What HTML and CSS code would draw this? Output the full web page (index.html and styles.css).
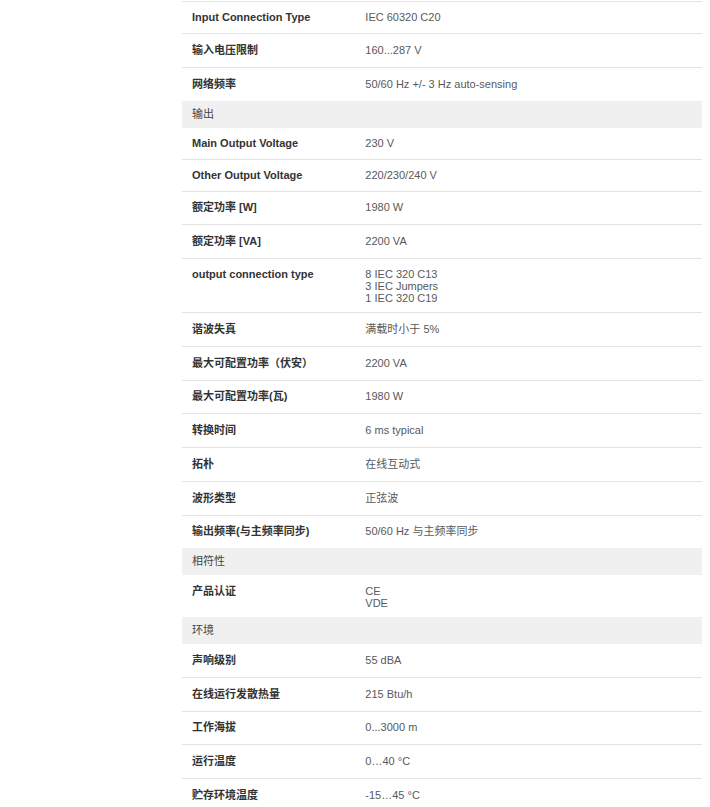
FILE: index.html
```html
<!DOCTYPE html>
<html lang="zh-CN">
<head>
  <meta charset="UTF-8">
  <meta name="viewport" content="width=device-width, initial-scale=1.0">
  <title>技术规格</title>
  <link rel="stylesheet" href="styles.css">
</head>
<body>
  <div class="layout">
    <aside class="sidebar"></aside>
    <main class="specs">
      <div class="spec-row"><div class="spec-label">Input Connection Type</div><div class="spec-value">IEC 60320 C20</div></div>
      <div class="spec-row"><div class="spec-label">输入电压限制</div><div class="spec-value">160...287 V</div></div>
      <div class="spec-row"><div class="spec-label">网络频率</div><div class="spec-value">50/60 Hz +/- 3 Hz auto-sensing</div></div>

      <div class="spec-group">输出</div>
      <div class="spec-row"><div class="spec-label">Main Output Voltage</div><div class="spec-value">230 V</div></div>
      <div class="spec-row"><div class="spec-label">Other Output Voltage</div><div class="spec-value">220/230/240 V</div></div>
      <div class="spec-row"><div class="spec-label">额定功率 [W]</div><div class="spec-value">1980 W</div></div>
      <div class="spec-row"><div class="spec-label">额定功率 [VA]</div><div class="spec-value">2200 VA</div></div>
      <div class="spec-row"><div class="spec-label">output connection type</div><div class="spec-value">8 IEC 320 C13<br>3 IEC Jumpers<br>1 IEC 320 C19</div></div>
      <div class="spec-row"><div class="spec-label">谐波失真</div><div class="spec-value">满载时小于 5%</div></div>
      <div class="spec-row"><div class="spec-label">最大可配置功率（伏安）</div><div class="spec-value">2200 VA</div></div>
      <div class="spec-row"><div class="spec-label">最大可配置功率(瓦)</div><div class="spec-value">1980 W</div></div>
      <div class="spec-row"><div class="spec-label">转换时间</div><div class="spec-value">6 ms typical</div></div>
      <div class="spec-row"><div class="spec-label">拓朴</div><div class="spec-value">在线互动式</div></div>
      <div class="spec-row"><div class="spec-label">波形类型</div><div class="spec-value">正弦波</div></div>
      <div class="spec-row"><div class="spec-label">输出频率(与主频率同步)</div><div class="spec-value">50/60 Hz 与主频率同步</div></div>

      <div class="spec-group">相符性</div>
      <div class="spec-row"><div class="spec-label">产品认证</div><div class="spec-value">CE<br>VDE</div></div>

      <div class="spec-group">环境</div>
      <div class="spec-row"><div class="spec-label">声响级别</div><div class="spec-value">55 dBA</div></div>
      <div class="spec-row"><div class="spec-label">在线运行发散热量</div><div class="spec-value">215 Btu/h</div></div>
      <div class="spec-row"><div class="spec-label">工作海拔</div><div class="spec-value">0...3000 m</div></div>
      <div class="spec-row"><div class="spec-label">运行温度</div><div class="spec-value">0…40 °C</div></div>
      <div class="spec-row"><div class="spec-label">贮存环境温度</div><div class="spec-value">-15…45 °C</div></div>
    </main>
  </div>
</body>
</html>
```

FILE: styles.css
```css
body {
  font-family: "Liberation Sans", Arial, "Noto Sans CJK SC", sans-serif;
  font-size: 11px;
  color: #333;
  background: #fff;
  margin: 0;
}
.layout {
  display: grid;
  grid-template-columns: 182px 520px;
  padding-top: 1px;
}
.specs {
  display: flex;
  flex-direction: column;
}
.spec-row {
  display: grid;
  grid-template-columns: 1fr 2fr;
  align-items: baseline;
  border-top: 1px solid #e4e4e4;
}
.spec-group + .spec-row {
  border-top: none;
}
.spec-label {
  padding: 6.75px 10px 10px;
  font-weight: bold;
  color: #333;
}
.spec-value {
  padding: 9px 10px 8px;
  line-height: 12px;
  color: #595959;
}
.spec-group {
  background-color: #f0f0f0;
  color: #444;
  padding: 0 10px;
  height: 27px;
  line-height: 26px;
}
```
